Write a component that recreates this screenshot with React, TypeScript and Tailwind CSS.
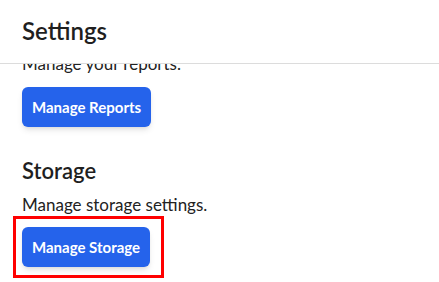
export default function App() {
  return (
    <div className="relative h-[282px] w-[439px] overflow-hidden bg-white font-['Lato',sans-serif] text-[#222222]">
      {/* Header */}
      <div className="flex h-16 items-center border-b border-[#dcdcdc] px-[22px] pb-[2px]">
        <h1 className="text-[24px] font-semibold leading-8 text-[#1f1f1f]">Settings</h1>
      </div>

      {/* Scrolled content */}
      <div className="h-[217px] overflow-hidden">
        <div className="-mt-[12px] px-[22px]">
          <section>
            <p className="text-[17px] leading-6">Manage your reports.</p>
            <button className="mt-[11px] h-10 rounded-md bg-[#2563eb] px-2.5 text-[15px] font-bold text-white shadow-md">
              Manage Reports
            </button>
          </section>

          <section className="mt-[30px]">
            <h2 className="text-[22px] font-semibold leading-7 text-[#1f1f1f]">Storage</h2>
            <p className="mt-[8px] text-[17px] leading-6">Manage storage settings.</p>
            <button className="mt-[10px] h-10 rounded-md bg-[#2563eb] px-2.5 text-[15px] font-bold text-white shadow-md">
              Manage Storage
            </button>
          </section>
        </div>
      </div>

      {/* Highlight box */}
      <div className="pointer-events-none absolute left-[13px] top-[216px] h-[62px] w-[151px] border-[3px] border-[#ff0000]" />
    </div>
  );
}
